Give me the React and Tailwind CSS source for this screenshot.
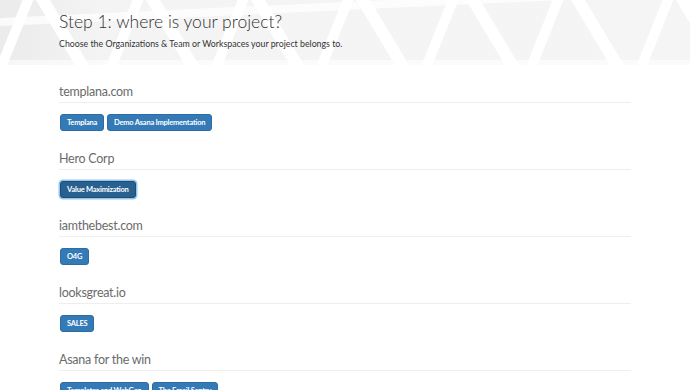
import React from 'react'

const groups = [
  { name: 'templana.com', items: [{ label: 'Templana' }, { label: 'Demo Asana Implementation' }] },
  { name: 'Hero Corp', items: [{ label: 'Value Maximization', active: true }] },
  { name: 'iamthebest.com', items: [{ label: 'O4G' }] },
  { name: 'looksgreat.io', items: [{ label: 'SALES' }] },
  { name: 'Asana for the win', items: [{ label: 'Templates and WebGen' }, { label: 'The Email Sentry' }] },
]

// zigzag of white bands over the light grey header
function HeaderPattern() {
  const down = [-60, 40, 150, 255, 360, 470, 575, 680]
  const up = [0, 110, 215, 320, 425, 530, 640, 745]
  return (
    <svg className="absolute inset-0 h-full w-full" viewBox="0 0 690 65" preserveAspectRatio="none">
      <defs>
        <linearGradient id="fade" x1="0" y1="0" x2="1" y2="0">
          <stop offset="0" stopColor="#ebebeb" />
          <stop offset="0.15" stopColor="#f4f4f4" />
          <stop offset="1" stopColor="#f5f5f5" />
        </linearGradient>
      </defs>
      <rect width="690" height="65" fill="url(#fade)" />
      {down.map((x) => (
        <line key={'d' + x} x1={x} y1={-5} x2={x + 45} y2={70} stroke="#fff" strokeWidth="12" />
      ))}
      {up.map((x) => (
        <line key={'u' + x} x1={x} y1={70} x2={x + 30} y2={-5} stroke="#fff" strokeWidth="10" />
      ))}
      <line x1="0" y1="22" x2="690" y2="-10" stroke="#fff" strokeWidth="8" opacity="0.8" />
      <rect y="60" width="690" height="5" fill="#fff" opacity="0.6" />
    </svg>
  )
}

function Group({ name, items }) {
  return (
    <div className="mb-[18px]">
      <h3 className="border-b border-[#eee] text-[12.5px] leading-[20px] font-normal tracking-[-0.02em] text-[#6b6b6b]">
        {name}
      </h3>
      <div className="mt-[11px] ml-px flex gap-[3px]">
        {items.map((it) => (
          <button
            key={it.label}
            className={
              it.active
                ? 'h-[17px] rounded-[3px] border border-[#204d74] bg-[#286090] px-[6px] text-[7.5px] leading-none font-bold tracking-[-0.03em] text-white shadow-[0_0_0_1.5px_rgba(102,175,233,0.7)]'
                : 'h-[17px] rounded-[3px] border border-[#2e6da4] bg-[#337ab7] px-[6px] text-[7.5px] leading-none font-bold tracking-[-0.03em] text-white'
            }
          >
            {it.label}
          </button>
        ))}
      </div>
    </div>
  )
}

export default function App() {
  return (
    <div className="h-[390px] w-[690px] overflow-hidden bg-white font-['Lato','Open_Sans',sans-serif]">
      <div className="relative h-[65px]">
        <HeaderPattern />
        <div className="relative mx-auto w-[572px] pt-[11px] text-[#333]">
          <h1 className="text-[17.5px] leading-[22px] font-light">Step 1: where is your project?</h1>
          <p className="mt-[5px] text-[8.8px] leading-[12px]">
            Choose the Organizations &amp; Team or Workspaces your project belongs to.
          </p>
        </div>
      </div>
      <div className="mx-auto mt-[17px] w-[572px]">
        {groups.map((g) => (
          <Group key={g.name} {...g} />
        ))}
      </div>
    </div>
  )
}
